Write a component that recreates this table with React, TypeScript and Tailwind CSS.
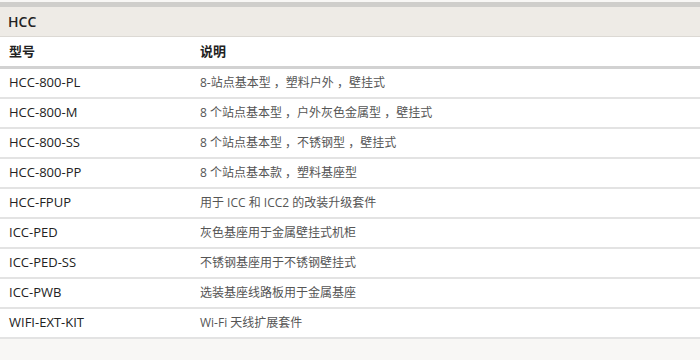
const rows: [string, string][] = [
  ["HCC-800-PL", "8-站点基本型 ，塑料户外 ，壁挂式"],
  ["HCC-800-M", "8 个站点基本型 ，户外灰色金属型 ，壁挂式"],
  ["HCC-800-SS", "8 个站点基本型 ，不锈钢型 ，壁挂式"],
  ["HCC-800-PP", "8 个站点基本款 ，塑料基座型"],
  ["HCC-FPUP", "用于 ICC 和 ICC2 的改装升级套件"],
  ["ICC-PED", "灰色基座用于金属壁挂式机柜"],
  ["ICC-PED-SS", "不锈钢基座用于不锈钢壁挂式"],
  ["ICC-PWB", "选装基座线路板用于金属基座"],
  ["WIFI-EXT-KIT", "Wi-Fi 天线扩展套件"],
];

const font = "font-['Open_Sans','Noto_Sans_CJK_SC',sans-serif]";

export default function App() {
  return (
    <div className={`w-[700px] h-[360px] bg-[#f8f7f5] pt-[2px] ${font}`}>
      <div className="border-t-[5px] border-[#cfcecb]">
        <div className="h-[30px] bg-[#eeebe6] border-b border-[#dcd9d4] flex items-center px-[8px] text-[14px] font-semibold text-[#222]">
          HCC
        </div>
        <div className="h-[32px] bg-white border-b-[3px] border-[#d2d2d2] flex items-center text-[13px] font-semibold text-[#222]">
          <div className="w-[200px] pl-[9px]">型号</div>
          <div>说明</div>
        </div>
        {rows.map(([model, desc]) => (
          <div
            key={model}
            className="h-[30px] bg-white border-b-2 border-[#e3e3e3] flex items-center"
          >
            <div className="w-[200px] pl-[9px] text-[13px] text-[#222]">{model}</div>
            <div className="text-[12px] text-[#555]">{desc}</div>
          </div>
        ))}
      </div>
    </div>
  );
}
